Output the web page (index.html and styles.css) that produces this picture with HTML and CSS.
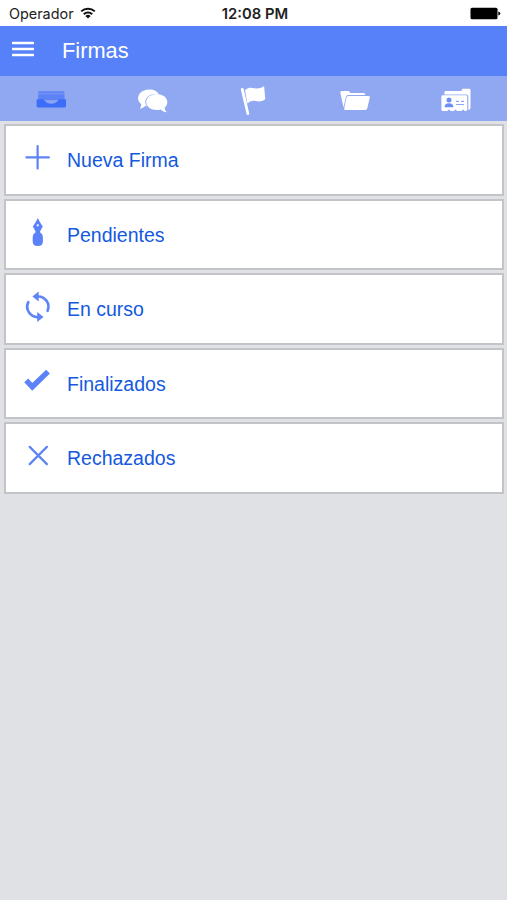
FILE: index.html
```
<!DOCTYPE html>
<html lang="es">
<head>
    <meta charset="UTF-8">
    <meta name="viewport" content="width=device-width, initial-scale=1.0">
    <title>Firmas</title>
    <link rel="stylesheet" href="styles.css">
</head>
<body>
    <!-- Barra de estado -->
    <div class="status-bar">
        <div class="carrier">
            <span>Operador</span>
            <svg class="wifi" viewBox="0 0 16 12" fill="none" stroke="#111" stroke-width="2">
                <path d="M1.2 4.4a9.8 9.8 0 0 1 13.6 0M3.8 7.2a6 6 0 0 1 8.4 0"/>
                <path d="M8 11.6L5.4 9a3.8 3.8 0 0 1 5.2 0z" fill="#111" stroke="none"/>
            </svg>
        </div>
        <span class="clock">12:08 PM</span>
        <svg class="battery" viewBox="0 0 31 13">
            <rect x=".5" y=".7" width="27" height="11.6" rx="1.5"/>
            <path d="M28.3 4.5q2 .3 2 2t-2 2z"/>
        </svg>
    </div>

    <!-- Cabecera -->
    <header class="header">
        <svg class="menu-icon" viewBox="0 0 24 18" fill="#fff">
            <rect x="1" y="1.8" width="22" height="2.4" rx=".6"/>
            <rect x="1" y="7.8" width="22" height="2.4" rx=".6"/>
            <rect x="1" y="13.8" width="22" height="2.4" rx=".6"/>
        </svg>
        <h1>Firmas</h1>
    </header>

    <!-- Pestañas -->
    <nav class="tabs">
        <a class="tab">
            <svg viewBox="0 -.5 40 40">
                <path d="M7.5 11.8h25.7l.6 9H7z" fill="#5c82f5"/>
                <path d="M8 14.2h25" stroke="#7d9af5" stroke-width=".9"/>
                <path d="M6.6 19.8h6.9q1.5 3.8 6.8 3.8t6.8-3.8h7.2q.7 0 .7 1v5.700q0 1.400-1.400 1.400H7q-1.400 0-1.400-1.400v-5.700q0-1 1-1z" fill="#3b6df8"/>
                <path d="M13.200 20.200q1.700 3.700 7.100 3.700t7.100-3.700" fill="none" stroke="#90a8f4" stroke-width=".9"/>
            </svg>
        </a>
        <a class="tab">
            <svg viewBox="0 -2 40 40" fill="#fff">
                <path d="M17 8.600c5 0 8.600 2 9.700 4.600-7-1.400-13.400 2.200-13.400 7.700 0 2 .7 3.300 1.800 4.400l-2-.4c-1.300 1.500-2.900 2.400-5.400 2.600 1.100-1.200 1.700-2.600 1.500-4.500-2-1.500-3.100-3.400-3.100-5.600 0-5 4.800-8.800 10.900-8.800z"/>
                <path d="M24.700 13c6 0 10.600 3.600 10.600 8.100 0 2.400-1 4.300-2.700 5.600.1 1.900 1 3.300 2.300 4.500-2.600-.1-4.600-1-6.200-2.700-1.200.4-2.500.6-3.800.6-6 0-10.700-3.500-10.700-8s4.500-8.100 10.500-8.100z"/>
            </svg>
        </a>
        <a class="tab">
            <svg viewBox="1 -1 40 40" fill="#fff">
                <path d="M7.800 9.600a1.500 1.500 0 0 1 2.900-.7l5.500 24.500q.2 1.300-1 1.600-1.300.2-1.600-1z"/>
                <path d="M12 10c4-3.200 6.300-2.400 9.600-1.800 3.100.6 5.700.1 9.500-1.900l1.200 13c-3.500 2.500-6.500 2.300-9.600 1.700-3-.5-5.300 0-8.300 2.500z"/>
            </svg>
        </a>
        <a class="tab">
            <svg viewBox="0 -1 40 40" fill="#fff">
                <path d="M6.600 11h6.700q1 0 1.400.9l.6 1.200h13.400q1.500 0 1.500 1.500v.4H13.300q-2 0-2.500 1.900L8.500 27.600 5.300 12.600q-.2-1.600 1.300-1.600z"/>
                <path d="M13.400 16h20.200q1.600 0 1.200 1.500l-2.500 10.800q-.4 1.600-2 1.600H10.400q-1.500 0-1.200-1.500l2.200-10.800q.4-1.600 2-1.600z"/>
            </svg>
        </a>
        <a class="tab">
            <svg viewBox="0 -1.5 40 40">
                <path d="M8.400 14v-2q0-1.400 1.400-1.400h15.600l1-2.400h6.800q1.300 0 1.300 1.400v17.600q0 2-2.200 2.200V16q0-2-2-2z" fill="#fff"/>
                <path d="M6.800 14.800h23q1.400 0 1.400 1.400v12.700q0 1.600-1.500 1.600h-1.300q-.3-1.500-1.300-1.500t-1.300 1.500h-5q-.3-1.500-1.300-1.500t-1.300 1.500h-4q-.3-1.500-1.300-1.500t-1.300 1.500H6.800q-1.400 0-1.400-1.600V16.200q0-1.400 1.400-1.400z" fill="#fff"/>
                <circle cx="13" cy="19.500" r="2.500" fill="#6d8ff5"/>
                <path d="M8.600 26.700q0-4 4.400-4t4.400 4z" fill="#6d8ff5"/>
                <path d="M20 20.800h3m2 0h3M20 24h8" stroke="#8ca6f4" stroke-width="1.200"/>
            </svg>
        </a>
    </nav>

    <!-- Lista de opciones -->
    <main class="list">
        <a class="item">
            <svg viewBox="0 0 40 40" fill="none" stroke="#5e84f4" stroke-width="2.200" stroke-linecap="round">
                <path d="M19.600 6.200v22.400M8.400 17.400h22.500"/>
            </svg>
            <span>Nueva Firma</span>
        </a>
        <a class="item">
            <svg viewBox="0 -.8 40 40" fill="#5b82f8">
                <path fill-rule="evenodd" d="M19.800 3.100c1.600 3.500 3.500 6 5 8.700L22 16.800h-4.400l-2.800-5c1.500-2.700 3.400-5.200 5-8.700zm0 6.300a1.100 1.100 0 1 0 0 2.200 1.100 1.100 0 0 0 0-2.200z"/>
                <path d="M17.700 16.200h4.200l.3 1.600q2.700 1.400 2.700 4.300v4.800q0 4.200-5.100 4.200t-5.100-4.200v-4.800q0-2.900 2.700-4.300z"/>
            </svg>
            <span>Pendientes</span>
        </a>
        <a class="item">
            <svg viewBox="0 0 40 40" fill="none" stroke="#5e84f6" stroke-width="2.700" stroke-linecap="round">
                <path d="M19.500 7.500A10.300 10.300 0 0 1 29.600 21.800M10.300 13.200A10.300 10.300 0 0 0 20.500 28"/>
                <path d="M14.400 7.500l6.300-4.900v9.800zM25.500 28l-6.300-4.900v9.800z" fill="#5e84f6" stroke="none"/>
            </svg>
            <span>En curso</span>
        </a>
        <a class="item">
            <svg viewBox="0 -.8 40 40" fill="none" stroke="#5b82f8" stroke-width="5.400">
                <path d="M8.200 16.600l6.100 6.400L30 7.800"/>
            </svg>
            <span>Finalizados</span>
        </a>
        <a class="item">
            <svg viewBox="0 0 40 40" fill="none" stroke="#5e84f4" stroke-width="2.200" stroke-linecap="round">
                <path d="M11.700 8.900l17.200 17.200M28.900 8.900L11.700 26.100"/>
            </svg>
            <span>Rechazados</span>
        </a>
    </main>
</body>
</html>
```

FILE: styles.css
```
/* Base */
* {
    margin: 0;
    padding: 0;
    box-sizing: border-box;
}

body {
    min-height: 100vh;
    font-family: "Liberation Sans", Arial, sans-serif;
    background-color: #dfe1e5;
}

svg {
    display: block;
    flex: none;
}

/* Barra de estado */
.status-bar {
    display: grid;
    grid-template-columns: 1fr auto 1fr;
    align-items: center;
    height: 25.5px;
    padding: 2px 6px 0 9px;
    background-color: #fff;
    color: #222;
    font-family: Inter, sans-serif;
    font-size: 14.4px;
}

.carrier {
    display: flex;
    align-items: center;
    gap: 6px;
}

.wifi {
    width: 16px;
    height: 12px;
    margin-top: -2px;
}

.clock {
    font-weight: 600;
    font-size: 14.8px;
}

.battery {
    width: 31px;
    height: 13px;
    margin-top: -1px;
    justify-self: end;
}

/* Cabecera */
.header {
    display: flex;
    align-items: center;
    gap: 27px;
    height: 50.5px;
    padding-left: 11px;
    background-color: #5681f9;
    color: #fff;
}

.header h1 {
    font-size: 21.8px;
    font-weight: normal;
}

.menu-icon {
    width: 24px;
    height: 18px;
    margin-top: -4px;
}

/* Pestañas */
.tabs {
    display: flex;
    height: 44.5px;
    padding-top: 2px;
    background-color: #90a8f2;
}

.tab {
    display: flex;
    flex: 1;
    align-items: center;
    justify-content: center;
}

.tab svg {
    width: 40px;
    height: 40px;
}

/* Lista */
.list {
    display: flex;
    flex-direction: column;
    gap: 3px;
    padding: 3.5px 3px 0 4px;
}

.item {
    display: flex;
    align-items: center;
    gap: 9px;
    height: 71.5px;
    padding-left: 12px;
    border: 2px solid #c3c4c7;
    background-color: #fff;
    color: #1459de;
    font-size: 19.5px;
}

.item svg {
    width: 40px;
    height: 40px;
}

.item span {
    padding-top: 2px;
}
```
